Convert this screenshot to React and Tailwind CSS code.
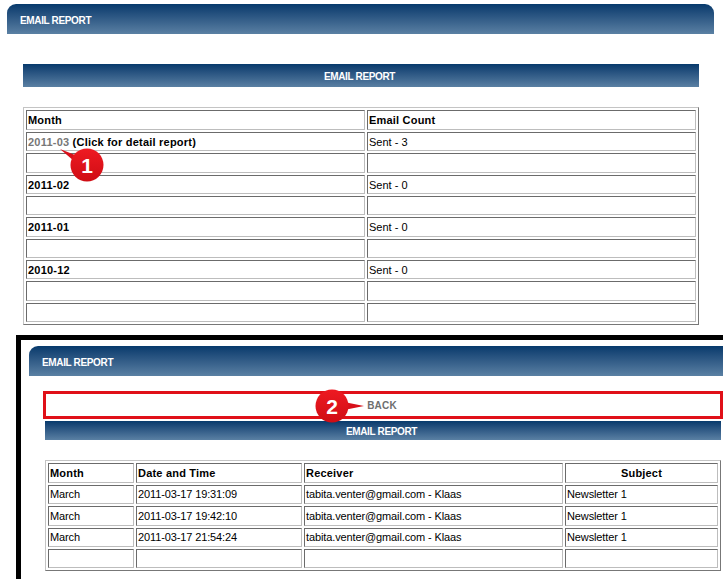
const barGradient = "bg-gradient-to-b from-[#063a6c] to-[#5a80a3]";

const monthRows = [
  { month: "2011-03", count: "Sent - 3", link: true, h: "h-[19px]" },
  { h: "h-[20px]" },
  { month: "2011-02", count: "Sent - 0", h: "h-[19px]" },
  { h: "h-[19px]" },
  { month: "2011-01", count: "Sent - 0", h: "h-[20px]" },
  { h: "h-[19px]" },
  { month: "2010-12", count: "Sent - 0", h: "h-[19px]" },
  { h: "h-[20px]" },
  { h: "h-[19px]" },
];

const detailRows = [
  { month: "March", date: "2011-03-17 19:31:09", h: "h-[19px]" },
  { month: "March", date: "2011-03-17 19:42:10", h: "h-[20px]" },
  { month: "March", date: "2011-03-17 21:54:24", h: "h-[19px]" },
  { h: "h-[19px]" },
];

const cell = "border border-t-[#6b6b6b] border-l-[#6b6b6b] border-r-[#bdbdbd] border-b-[#bdbdbd] px-px py-0 align-middle";
const table = "border border-t-[#c4c4c4] border-l-[#c4c4c4] border-r-[#777777] border-b-[#777777] border-separate border-spacing-[2px] table-fixed w-[676px]";

function PageHeader() {
  return (
    <div className={`h-[30px] flex items-center pl-[13px] pt-1 rounded-t-[9px] text-[10px] font-bold tracking-[-0.35px] text-white ${barGradient}`}>
      EMAIL REPORT
    </div>
  );
}

function SectionBar({ className }) {
  return (
    <div className={`flex items-center justify-center pt-[2px] text-[10px] font-bold tracking-[-0.35px] text-white ${barGradient} ${className}`}>
      EMAIL REPORT
    </div>
  );
}

function Badge({ n, id, className, tail }) {
  return (
    <div className={`absolute ${className}`}>
      <svg width="36" height="36" viewBox="0 0 36 36" className="block overflow-visible">
        <defs>
          <linearGradient id={id} x1="0" y1="0" x2="0" y2="1">
            <stop offset="0" stopColor="#ee1a22" />
            <stop offset="1" stopColor="#cf0d14" />
          </linearGradient>
        </defs>
        <path d={tail} fill="#d8101a" />
        <circle cx="18" cy="18" r="16.5" fill={`url(#${id})`} />
      </svg>
      <span className="absolute left-0 top-0 w-[36px] h-[36px] flex items-center justify-center text-[21px] font-bold text-white">
        {n}
      </span>
    </div>
  );
}

export default function App() {
  return (
    <div className="relative w-[723px] h-[579px] overflow-hidden bg-white text-[11px] leading-none text-black font-['Liberation_Sans',Arial,sans-serif]">
      <div className="pt-1 pl-[7px] pr-[9px]">
        <PageHeader />
      </div>

      <div className="pl-[23px] pr-[24px] pt-[30px]">
        <SectionBar className="h-[23px] pr-[3px]" />
      </div>

      {/* Monthly table */}
      <div className="pl-[23px] pt-[20px]">
        <table className={table}>
          <colgroup>
            <col className="w-[339px]" />
            <col />
          </colgroup>
          <tbody>
            <tr className="h-[20px] font-bold tracking-[0.2px]">
              <td className={cell}>Month</td>
              <td className={cell}>Email Count</td>
            </tr>
            {monthRows.map((row, i) => (
              <tr key={i} className={row.h}>
                <td className={`${cell} pt-px font-bold tracking-[0.22px]`}>
                  {row.link ? (
                    <>
                      <span className="text-[#777777]">{row.month}</span> (Click for detail report)
                    </>
                  ) : (
                    row.month
                  )}
                </td>
                <td className={`${cell} pt-px`}>{row.count}</td>
              </tr>
            ))}
          </tbody>
        </table>
      </div>

      {/* Second screenshot, cut off at the right and bottom */}
      <div className="mt-[10px] ml-4 w-[720px] h-[260px] border-l-[5px] border-t-[5px] border-black bg-white">
        <div className="pt-[6px] pl-2 -mr-2">
          <PageHeader />
        </div>

        <div className="ml-[22px] mt-[15px] w-[680px] h-[28px] border-[3px] border-[#e01018] flex items-center justify-center pt-[2px] pr-[2px] text-[10px] font-bold tracking-[0.2px] text-[#6e6e6e]">
          BACK
        </div>

        <div className="pl-[24px] pt-[2px]">
          <SectionBar className="w-[676px] h-[19px] pr-[3px]" />
        </div>

        <div className="pl-[24px] pt-[20px]">
          <table className={table}>
            <colgroup>
              <col className="w-[86px]" />
              <col className="w-[166px]" />
              <col className="w-[259px]" />
              <col />
            </colgroup>
            <tbody>
              <tr className="h-[20px] font-bold tracking-[0.2px]">
                <td className={cell}>Month</td>
                <td className={cell}>Date and Time</td>
                <td className={cell}>Receiver</td>
                <td className={`${cell} text-center`}>Subject</td>
              </tr>
              {detailRows.map((row, i) => (
                <tr key={i} className={`${row.h} tracking-[-0.12px]`}>
                  <td className={cell}>{row.month}</td>
                  <td className={cell}>{row.date}</td>
                  <td className={cell}>{row.month && "tabita.venter@gmail.com - Klaas"}</td>
                  <td className={cell}>{row.month && "Newsletter 1"}</td>
                </tr>
              ))}
            </tbody>
          </table>
        </div>
      </div>

      {/* Callouts */}
      <Badge n="1" id="badge-one" className="left-[69px] top-[147px] w-[36px] h-[36px]" tail="M-9 2 L6 8 L12 20 Z" />
      <Badge n="2" id="badge-two" className="left-[314px] top-[388px] w-[36px] h-[36px]" tail="M30 14 L50 18 L30 22 Z" />
    </div>
  );
}
